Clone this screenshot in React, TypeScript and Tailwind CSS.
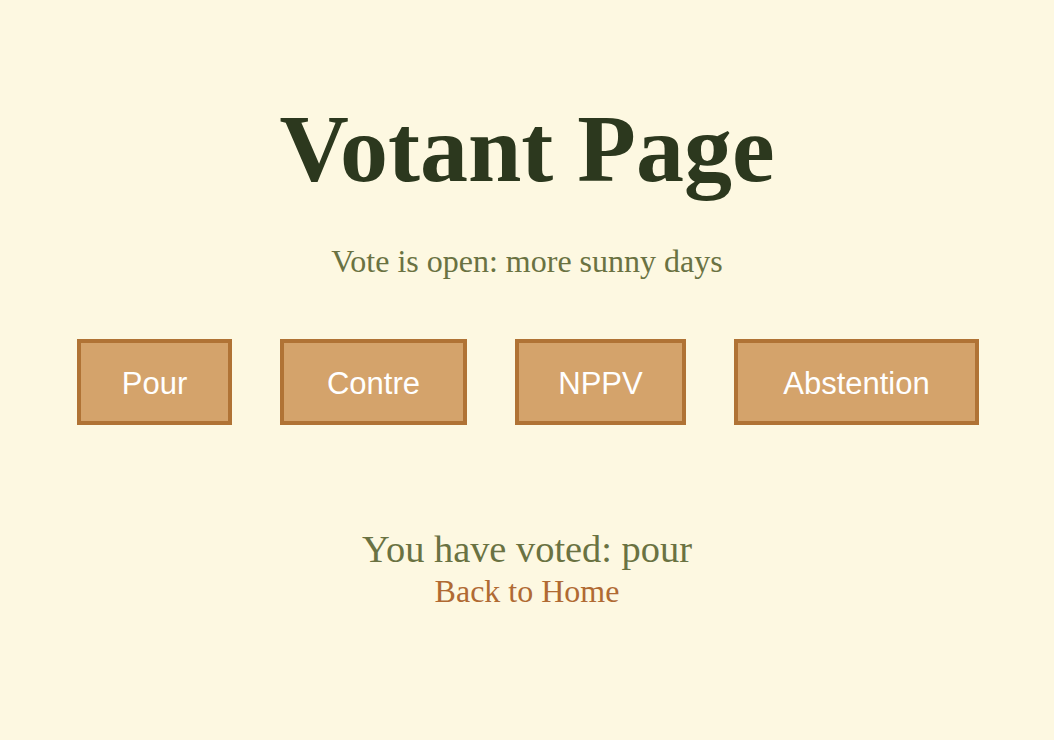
import React from 'react';

const choices = [
    { label: 'Pour', width: 'w-[155px]' },
    { label: 'Contre', width: 'w-[187px]' },
    { label: 'NPPV', width: 'w-[171px]' },
    { label: 'Abstention', width: 'w-[245px]' },
];

export default function App() {
    return (
        <div className="min-h-[740px] w-full bg-[#fdf8e1] flex flex-col items-center pt-[101px] font-['Liberation_Serif','Times_New_Roman',serif]">
            <h1 className="text-[96px] leading-none font-bold text-[#2c381e]">Votant Page</h1>

            <p className="mt-[48px] text-[32px] leading-none text-[#6a7242]">Vote is open: more sunny days</p>

            {/* Vote buttons */}
            <div className="mt-[62px] ml-[2px] flex gap-[48px]">
                {choices.map((c) => (
                    <button
                        key={c.label}
                        className={`${c.width} h-[86px] pt-[5px] flex items-center justify-center bg-[#d4a36b] border-4 border-[#b07335] text-white text-[31px] font-['Liberation_Sans',Arial,sans-serif]`}
                    >
                        {c.label}
                    </button>
                ))}
            </div>

            <p className="mt-[105px] text-[38.4px] leading-none text-[#6a7242]">You have voted: pour</p>
            <a href="#" className="mt-[7px] text-[32px] leading-none text-[#b06a33]">
                Back to Home
            </a>
        </div>
    );
}
